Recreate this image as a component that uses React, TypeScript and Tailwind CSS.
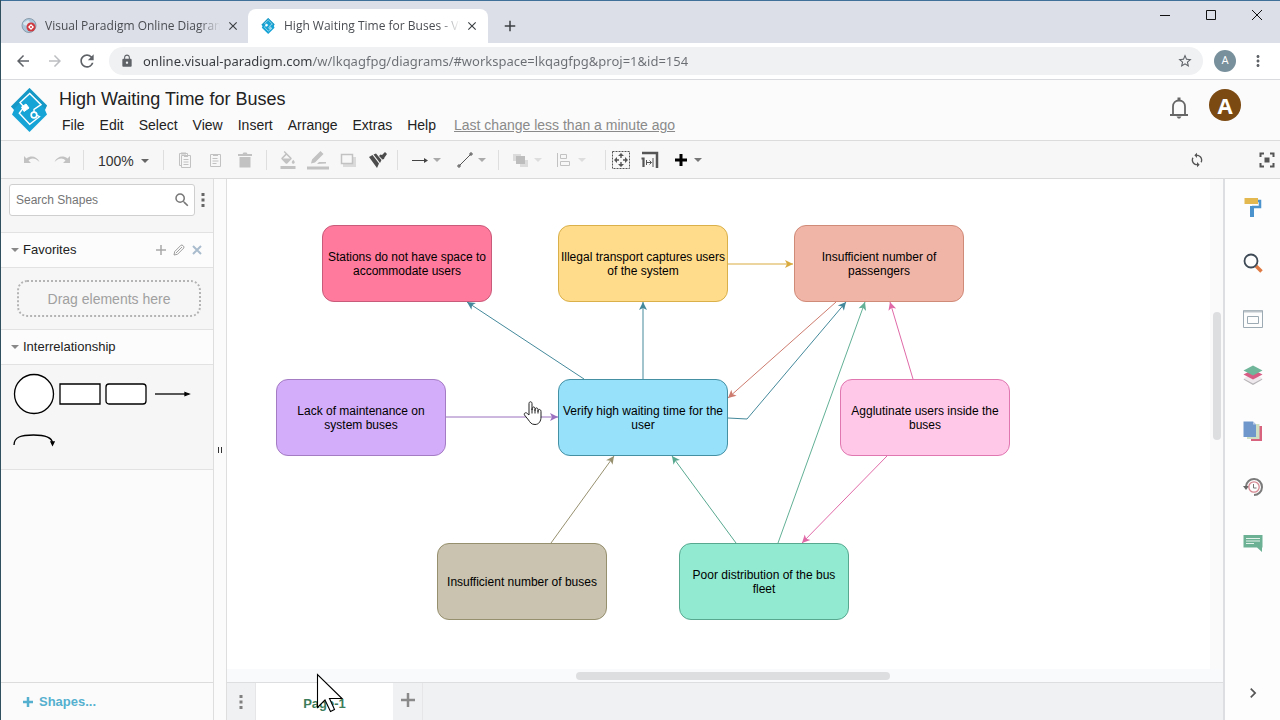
import React from 'react';
import {
    MdArrowBack,
    MdArrowForward,
    MdRefresh,
    MdLock,
    MdStarBorder,
    MdMoreVert,
    MdClose,
    MdAdd,
    MdFormatColorFill,
    MdChevronRight,
    MdSync,
    MdSearch
} from 'react-icons/md';

type Point = [number, number];

interface DiagramNode {
    label: string;
    className: string;
}

interface DiagramEdge {
    points: Point[];
    color: string;
}

interface IconButtonProps {
    label: string;
    className?: string;
    children: React.ReactNode;
}

const menus = ['File', 'Edit', 'Select', 'View', 'Insert', 'Arrange', 'Extras', 'Help'];

const nodes: DiagramNode[] = [
    { label: 'Stations do not have space to accommodate users', className: 'left-[95px] top-[46px] bg-[#ff7a9c] border-[#c85a7a]' },
    { label: 'Illegal transport captures users of the system', className: 'left-[331px] top-[46px] bg-[#ffdb8c] border-[#d9b04a]' },
    { label: 'Insufficient number of passengers', className: 'left-[567px] top-[46px] bg-[#f1b5a8] border-[#d08a78]' },
    { label: 'Lack of maintenance on system buses', className: 'left-[49px] top-[200px] bg-[#d4adfa] border-[#a47cc4]' },
    { label: 'Verify high waiting time for the user', className: 'left-[331px] top-[200px] bg-[#97e1fa] border-[#4690a4]' },
    { label: 'Agglutinate users inside the buses', className: 'left-[613px] top-[200px] bg-[#ffc8e8] border-[#e077b0]' },
    { label: 'Insufficient number of buses', className: 'left-[210px] top-[364px] bg-[#c9c3af] border-[#97906f]' },
    { label: 'Poor distribution of the bus fleet', className: 'left-[452px] top-[364px] bg-[#92ead1] border-[#58a890]' }
];

const edges: DiagramEdge[] = [
    { points: [[357, 200], [240, 123]], color: '#44899b' },
    { points: [[416, 200], [416, 123]], color: '#44899b' },
    { points: [[501, 85], [566, 85]], color: '#d9ab3f' },
    { points: [[609, 123], [501, 219]], color: '#cd7b6e' },
    { points: [[501, 239], [520, 240], [619, 123]], color: '#44899b' },
    { points: [[551, 364], [638, 123]], color: '#62b095' },
    { points: [[686, 200], [663, 123]], color: '#e06aa8' },
    { points: [[660, 277], [575, 364]], color: '#e06aa8' },
    { points: [[219, 238], [331, 238]], color: '#9a72c0' },
    { points: [[324, 364], [387, 277]], color: '#97906f' },
    { points: [[509, 364], [445, 277]], color: '#58a890' }
];

// notched arrow head, pointing from the second to last point to the last one
const arrowHead = (points: Point[]) => {
    const [x1, y1] = points[points.length - 2];
    const [x2, y2] = points[points.length - 1];
    const len = Math.hypot(x2 - x1, y2 - y1);
    const ux = (x2 - x1) / len;
    const uy = (y2 - y1) / len;
    const at = (back: number, side: number) => `${x2 - ux * back - uy * side},${y2 - uy * back + ux * side}`;
    return [at(0, 0), at(8, 4), at(6, 0), at(8, -4)].join(' ');
};

const IconButton: React.FC<IconButtonProps> = ({ label, className = '', children }) => (
    <button type="button" aria-label={label} title={label} className={`flex items-center justify-center ${className}`}>
        {children}
    </button>
);

const Caret: React.FC<{ className?: string }> = ({ className = '' }) => (
    <svg className={`h-1 w-2 ${className}`} viewBox="0 0 8 4" fill="currentColor">
        <path d="M0 0h8L4 4z" />
    </svg>
);

const VpLogo: React.FC<{ className?: string }> = ({ className = '' }) => (
    <svg className={className} viewBox="0 0 38 44">
        <path d="M19.500 0L37 17.500L35 22L37 26.500L19.500 44L2 26.500L4 22L1 18.500z" fill="#16a3d6" />
        <path d="M19.500 0L37 17.500L35 21L19.500 5.500L4 21L1 18.500z" fill="#1791bb" opacity=".6" />
        <path d="M24 24V21.300L31 16.700L19.700 5.500L10 14.500L14 19L9.300 25.300L19.700 36.300L29.500 28.700L26.500 27" fill="none" stroke="#fff" strokeWidth="1.400" />
        <path d="M11.500 19l4.500-3 3 4-5 3.500z" fill="#fff" stroke="#fff" />
        <circle cx="24" cy="27" r="2.800" fill="#16a3d6" stroke="#fff" strokeWidth="1.700" />
    </svg>
);

const TabStrip = () => (
    <div className="flex h-[43px] items-end border-t border-[#3f7099] bg-[#dddfe8] text-xs text-[#4a4d52] font-['Open_Sans','Noto_Sans',sans-serif]">
        <div className="flex h-[34px] w-[247px] items-center pl-5 pr-[7px]">
            <svg className="h-4 w-4 shrink-0" viewBox="0 0 16 16">
                <circle cx="8" cy="7.500" r="7" fill="#a9c6da" stroke="#8a9cab" />
                <path d="M2 5l5-3 3 3-3 3-4-1z" fill="#d9e6ee" />
                <circle cx="10" cy="9" r="4.500" fill="#cf3a40" />
                <path d="M10 6l3 3-3 3-3-3z" fill="#fff" />
                <path d="M10 8v2" stroke="#cf3a40" strokeWidth="1.500" />
            </svg>
            <span className="ml-2 w-[175px] whitespace-nowrap [mask-image:linear-gradient(to_right,black_88%,transparent)]">
                Visual Paradigm Online Diagrams
            </span>
            <IconButton label="Close tab" className="ml-auto h-4 w-4 shrink-0 text-[#3c4043]">
                <MdClose className="h-3.5 w-3.5" />
            </IconButton>
        </div>
        <div className="flex h-[34px] w-[240px] items-center rounded-t-lg bg-white pl-3 pr-2">
            <VpLogo className="h-4 w-4 shrink-0" />
            <span className="ml-2 w-[176px] whitespace-nowrap [mask-image:linear-gradient(to_right,black_88%,transparent)]">
                High Waiting Time for Buses - VP
            </span>
            <IconButton label="Close tab" className="ml-auto h-4 w-4 shrink-0 text-[#3c4043]">
                <MdClose className="h-3.5 w-3.5" />
            </IconButton>
        </div>
        <IconButton label="New tab" className="ml-3 h-[34px] w-5 text-[#3c4043]">
            <MdAdd className="h-[18px] w-[18px]" />
        </IconButton>
        <div className="ml-auto flex self-start text-[#111]">
            <IconButton label="Minimize" className="h-7 w-[46px]">
                <svg className="h-3 w-3" viewBox="0 0 12 12" fill="none" stroke="currentColor"><path d="M1 6.500h10" /></svg>
            </IconButton>
            <IconButton label="Maximize" className="h-7 w-[46px]">
                <svg className="h-3 w-3" viewBox="0 0 12 12" fill="none" stroke="currentColor"><path d="M1.500 1.500h9v9h-9z" /></svg>
            </IconButton>
            <IconButton label="Close" className="h-7 w-[46px]">
                <svg className="h-3 w-3" viewBox="0 0 12 12" fill="none" stroke="currentColor"><path d="M1 1l10 10M11 1L1 11" /></svg>
            </IconButton>
        </div>
    </div>
);

const AddressBar = () => (
    <div className="flex h-[37px] items-center border-b border-[#d9dadd] bg-white pl-3 pr-3 text-[#5f6368]">
        <IconButton label="Back" className="h-5 w-5"><MdArrowBack className="h-[18px] w-[18px]" /></IconButton>
        <IconButton label="Forward" className="ml-3 h-5 w-5 text-[#bcbec1]"><MdArrowForward className="h-[18px] w-[18px]" /></IconButton>
        <IconButton label="Reload" className="ml-3 h-5 w-5"><MdRefresh className="h-5 w-5" /></IconButton>
        <div className="ml-3 flex h-7 flex-1 items-center rounded-full bg-[#f0f1f3] pl-[11px] pr-2.5">
            <MdLock className="h-3.5 w-3.5" />
            {/* the host part of the address is darker than the path */}
            <input
                aria-label="Address"
                className="ml-[9px] h-6 flex-1 bg-[linear-gradient(to_right,#35383c_169px,#6a6e73_169px)] bg-clip-text text-[13px] text-transparent outline-none font-['Noto_Sans','Open_Sans',sans-serif]"
                defaultValue="online.visual-paradigm.com/w/lkqagfpg/diagrams/#workspace=lkqagfpg&proj=1&id=154"
            />
            <IconButton label="Bookmark" className="h-4 w-4"><MdStarBorder className="h-4 w-4" /></IconButton>
        </div>
        <button type="button" className="ml-[11px] h-[22px] w-[22px] rounded-full bg-[#78909c] text-[11px] text-white font-[Roboto,sans-serif]">A</button>
        <IconButton label="Menu" className="ml-3 h-5 w-5"><MdMoreVert className="h-[18px] w-[18px]" /></IconButton>
    </div>
);

const Header = () => (
    <header className="flex h-[61px] items-start border-b border-[#dcdcdc] bg-[#fbfbfb] pl-[9px]">
        <VpLogo className="mt-2 h-11 w-[38px]" />
        <div className="ml-[11px]">
            <h1 className="mt-2 text-lg leading-[22px] text-[#222]">High Waiting Time for Buses</h1>
            <nav className="mt-1.5 flex gap-[15px] pl-[3px] text-sm leading-[18px] text-[#222]">
                {menus.map((menu) => (
                    <button key={menu} type="button">{menu}</button>
                ))}
                <a href="#history" className="ml-[3px] text-[#8a8a8a] underline">Last change less than a minute ago</a>
            </nav>
        </div>
        <IconButton label="Notifications" className="ml-auto mt-4 h-6 w-6 text-[#666]">
            <svg className="h-6 w-5" viewBox="0 0 20 24" fill="none" stroke="currentColor" strokeWidth="1.800">
                <path d="M1 19h18M4 19V10.500C4 7 6.500 4.500 10 4.500S16 7 16 10.500V19" />
                <path d="M10 1.500v3" strokeWidth="3" />
                <path d="M7.500 20.500h5l-1.500 2h-2z" fill="currentColor" stroke="none" />
            </svg>
        </IconButton>
        <button type="button" className="ml-[18px] mr-[39px] mt-[9px] h-8 w-8 rounded-full bg-[#7b4a12] text-[22px] font-bold leading-8 text-white font-['Open_Sans',sans-serif]">A</button>
    </header>
);

const Separator = () => <div className="h-5 w-px bg-[#dedede]" />;

const Toolbar = () => (
    <div className="flex h-[38px] items-center border-b border-[#dadada] bg-[#f7f7f7] text-[#c2c2c2]">
        <div className="flex pl-4 pr-1.5">
            <IconButton label="Undo" className="h-6 w-[30px]">
                <svg className="h-2.5 w-4" viewBox="0 0 16 10" fill="currentColor"><path d="M0 1v7h7L4.500 5.500C7 2.500 11 2.500 15.500 7 13 1.500 7 0 2.500 3.500z" /></svg>
            </IconButton>
            <IconButton label="Redo" className="h-6 w-[30px]">
                <svg className="h-2.5 w-4" viewBox="0 0 16 10" fill="currentColor"><path d="M16 1v7H9l2.500-2.500C9 2.500 5 2.500.5 7 3 1.500 9 0 13.500 3.500z" /></svg>
            </IconButton>
        </div>
        <Separator />
        <button type="button" className="flex items-center gap-[7px] px-3.5 pt-0.5 text-sm text-[#333]">
            100% <Caret className="text-[#666]" />
        </button>
        <Separator />
        <div className="flex px-1.5">
            <IconButton label="Copy" className="h-6 w-[30px]">
                <svg className="h-4 w-4" viewBox="0 0 16 16" fill="none" stroke="currentColor"><path d="M4.500 13.500h-2v-12h8v2M4.500 3.500h9v12h-9zM6.500 7.500h5M6.500 10h5M6.500 12.500h5" /><path d="M4 1.500h5M7 4h4" strokeWidth="2" /></svg>
            </IconButton>
            <IconButton label="Paste" className="h-6 w-[30px]">
                <svg className="h-4 w-4" viewBox="0 0 16 16" fill="none" stroke="currentColor"><path d="M3.500 2.500h10v12h-10zM5.500 6.500h5M5.500 9h6M5.500 11.500h4" /><path d="M6 3h5" strokeWidth="2" /></svg>
            </IconButton>
            <IconButton label="Delete" className="h-6 w-[30px]">
                <svg className="h-4 w-4" viewBox="0 0 16 16" fill="currentColor"><path d="M1 2h4.500l1-1.500h3l1 1.500H15v2H1zM2.500 5h11v10.500h-11z" /></svg>
            </IconButton>
        </div>
        <Separator />
        <div className="flex pl-1.5 pr-1">
            <IconButton label="Fill color" className="h-6 w-[30px]"><MdFormatColorFill className="h-[18px] w-[18px]" /></IconButton>
            <IconButton label="Line color" className="h-6 w-[30px]">
                <svg className="h-5 w-[22px]" viewBox="0 0 22 20" fill="currentColor"><path d="M0 16.500h22v3H0zM4 13.500l1-4L13.500 1l3 3L8 12.500zM10 14l2-2h7v1.500z" /></svg>
            </IconButton>
            <IconButton label="Shadow" className="h-6 w-[30px]">
                <svg className="h-3.5 w-4" viewBox="0 0 16 14" fill="none"><path d="M3 4h13v10H3z" fill="#dadada" /><path d="M1.500 1.500h11v9h-11z" fill="#f7f7f7" stroke="currentColor" strokeWidth="1.500" /></svg>
            </IconButton>
            <IconButton label="Copy style" className="h-6 w-[30px] text-[#4c4c4c]">
                <svg className="h-4 w-[18px]" viewBox="0 0 18 16" fill="currentColor">
                    <path d="M0 5l3.500-2 6.500 8.500L8 16zM4.500 2.500L7 1.500l5.500 6.500-1.500 3zM10 4l1.500-1.500 1.500.500 3-3 2 2-2.500 3.500L15 7l-1.500.500z" />
                </svg>
            </IconButton>
        </div>
        <Separator />
        <div className="flex pl-1.5 pr-1">
            <IconButton label="Connection" className="h-6 w-[45px] gap-[5px]">
                <svg className="h-4 w-4 text-[#444]" viewBox="0 0 16 16" fill="none" stroke="currentColor"><path d="M0 8.500h12" /><path d="M12 6l4 2.500-4 2.500z" fill="currentColor" stroke="none" /></svg>
                <Caret className="text-[#aaa]" />
            </IconButton>
            <IconButton label="Waypoints" className="h-6 w-[45px] gap-[5px]">
                <svg className="h-4 w-4 text-[#555]" viewBox="0 0 16 16" fill="none" stroke="currentColor"><path d="M2.500 13.500l11-11" /><path d="M1 13h2v2H1zM13 1h2v2h-2z" /></svg>
                <Caret className="text-[#aaa]" />
            </IconButton>
        </div>
        <Separator />
        <div className="flex pl-1.5 pr-3">
            <IconButton label="To front" className="h-6 w-11 gap-1.5">
                <svg className="h-4 w-4" viewBox="0 0 16 16"><path d="M1 2h8v7H1zM8 8h8v7H8z" fill="#dcdcdc" /><path d="M4 4h9v8H4z" fill="#bdbdbd" /></svg>
                <Caret className="text-[#ddd]" />
            </IconButton>
            <IconButton label="Align" className="h-6 w-11 gap-1.5">
                <svg className="h-4 w-4" viewBox="0 0 16 16" fill="none" stroke="currentColor"><path d="M1.500 1v14M4.500 2.500h6v4h-6zM4.500 9.500h9v4h-9z" /></svg>
                <Caret className="text-[#ddd]" />
            </IconButton>
        </div>
        <Separator />
        <div className="flex items-center pl-px text-[#555]">
            <IconButton label="Fit page" className="h-6 w-[29px]">
                <svg className="h-[18px] w-[18px]" viewBox="0 0 18 18" fill="currentColor">
                    <path d="M.5.500h17v17H.500z" fill="none" stroke="currentColor" strokeDasharray="2 1" />
                    <path d="M9 2l3 3H9.700v2H8.300V5H6zM9 16l3-3H9.700v-2H8.300v2H6zM2 9l3-3v2.300h2v1.400H5V12zM16 9l-3-3v2.300h-2v1.400h2V12z" />
                </svg>
            </IconButton>
            <IconButton label="Page size" className="h-6 w-[29px]">
                <svg className="h-[18px] w-[18px]" viewBox="0 0 18 18" fill="none" stroke="currentColor">
                    <path d="M1 2h15V17" strokeWidth="2.500" />
                    <path d="M.5 7.500h2V16" strokeWidth="2.200" />
                    <path d="M5.500 11.500h5M8.500 9.500l2 2-2 2M12 7v9M5.500 9v5" />
                </svg>
            </IconButton>
            <IconButton label="Add" className="h-6 w-[46px] gap-1.5 text-[#000]">
                <svg className="h-3.5 w-3.5" viewBox="0 0 14 14" stroke="currentColor" strokeWidth="3"><path d="M7 1v12M1 7h12" /></svg>
                <Caret className="text-[#777]" />
            </IconButton>
        </div>
        <IconButton label="Sync" className="ml-auto h-6 w-6 text-[#555]"><MdSync className="h-4 w-4" /></IconButton>
        <IconButton label="Full screen" className="ml-[50px] mr-[5px] h-6 w-4 text-[#555]">
            <svg className="h-4 w-4" viewBox="0 0 16 16"><path d="M1.500 5V1.500H5M11 1.500h3.500V5M14.500 11v3.500H11M5 14.500H1.500V11" fill="none" stroke="currentColor" strokeWidth="2" /><path d="M5.500 5.500h5v5h-5z" fill="currentColor" /></svg>
        </IconButton>
    </div>
);

const Sidebar = () => (
    <aside className="flex w-[213px] shrink-0 flex-col border-r border-[#dedede] bg-[#fbfbfb] text-[13px] text-[#222]">
        <div className="flex h-[54px] items-start border-b border-[#e2e2e2] bg-[#f6f6f6] pl-2 pt-[5px]">
            <div className="flex h-8 w-[186px] items-center rounded-[3px] border border-[#cfcfcf] bg-white pl-1.5 pr-[3px]">
                <input
                    aria-label="Search Shapes"
                    className="w-full min-w-0 flex-1 bg-transparent text-xs outline-none placeholder:text-[#757575]"
                    placeholder="Search Shapes"
                />
                <MdSearch className="h-[18px] w-[18px] shrink-0 text-[#777]" />
            </div>
            <IconButton label="More" className="h-8 w-4 text-[#666]">
                <svg className="h-3.5 w-1" viewBox="0 0 4 14" fill="currentColor"><path d="M.5 0h3v3h-3zM.5 5.500h3v3h-3zM.5 11h3v3h-3z" /></svg>
            </IconButton>
        </div>
        <div className="flex h-[35px] items-center border-b border-[#e2e2e2] bg-[#fcfcfc] pl-2.5 pr-2">
            <button type="button" className="flex items-center gap-1"><Caret className="text-[#888]" /> Favorites</button>
            <div className="ml-auto flex gap-0.5">
                <IconButton label="Add" className="h-4 w-4 text-[#a8a8a8]">
                    <svg className="h-3 w-3" viewBox="0 0 12 12" stroke="currentColor" strokeWidth="1.500"><path d="M6 1v10M1 6h10" /></svg>
                </IconButton>
                <IconButton label="Edit" className="h-4 w-4 text-[#888]">
                    <svg className="h-3 w-3" viewBox="0 0 12 12" fill="none" stroke="currentColor"><path d="M1 11l.700-3.500L8 1.200c1-1 3.800 1.500 2.800 2.800L4.500 10.300zM2.800 9.200L9 3" strokeWidth=".8" /></svg>
                </IconButton>
                <IconButton label="Remove" className="h-4 w-4 text-[#a9bccd]">
                    <svg className="h-2.5 w-2.5" viewBox="0 0 10 10" stroke="currentColor" strokeWidth="2"><path d="M1 1l8 8M9 1L1 9" /></svg>
                </IconButton>
            </div>
        </div>
        <div className="border-b border-[#e2e2e2] bg-[#f6f6f6] px-3 pb-3 pl-4 pt-3">
            <div className="flex h-[37px] items-center justify-center rounded-[10px] border-2 border-dotted border-[#b4b4b4] text-sm text-[#a0a0a0]">
                Drag elements here
            </div>
        </div>
        <div className="flex h-[35px] items-center border-b border-[#e2e2e2] bg-[#fcfcfc] pl-2.5">
            <button type="button" className="flex items-center gap-1"><Caret className="text-[#888]" /> Interrelationship</button>
        </div>
        <div className="flex flex-wrap border-b border-[#e2e2e2] bg-[#f6f6f6] py-1.5 pl-2.5">
            <IconButton label="Circle" className="h-[46px] w-[46px]">
                <svg className="h-[42px] w-[42px]" viewBox="0 0 42 42" fill="#fff" stroke="#000" strokeWidth="1.300"><circle cx="21" cy="21" r="19.500" /></svg>
            </IconButton>
            <IconButton label="Rectangle" className="h-[46px] w-[46px]">
                <svg className="h-[42px] w-[42px]" viewBox="0 0 42 42" fill="#fff" stroke="#000" strokeWidth="1.300"><path d="M1 11h40v20H1z" /></svg>
            </IconButton>
            <IconButton label="Rounded rectangle" className="h-[46px] w-[46px]">
                <svg className="h-[42px] w-[42px]" viewBox="0 0 42 42" fill="#fff" stroke="#000" strokeWidth="1.300"><rect x="1" y="11" width="40" height="20" rx="3" /></svg>
            </IconButton>
            <IconButton label="Arrow" className="h-[46px] w-[46px]">
                <svg className="h-[42px] w-[42px]" viewBox="0 0 42 42" stroke="#000" strokeWidth="1.300"><path d="M4 21h31" /><path d="M34 19.500l4 1.500-4 1.500z" /></svg>
            </IconButton>
            <IconButton label="Curved arrow" className="h-[46px] w-[46px]">
                <svg className="h-[42px] w-[42px]" viewBox="0 0 42 42" fill="none" stroke="#000" strokeWidth="1.300"><path d="M1 26C1 18 8 16 20.500 16S39 19 39.500 24" /><path d="M38 23h3l-1.500 3z" fill="#000" /></svg>
            </IconButton>
        </div>
        <button type="button" className="mt-auto flex h-[38px] items-center gap-1.5 border-t border-[#dcdcdc] pl-[22px] text-[13px] font-bold text-[#55b0cf]">
            <svg className="h-2.5 w-2.5" viewBox="0 0 10 10" stroke="currentColor" strokeWidth="2.500"><path d="M5 0v10M0 5h10" /></svg>
            Shapes...
        </button>
    </aside>
);

const Diagram = () => (
    <div className="relative min-w-0 flex-1 overflow-hidden bg-white">
        <svg className="absolute left-0 top-0 h-full w-full" fill="none">
            {edges.map((edge, index) => (
                <g key={index}>
                    <polyline points={edge.points.map((p) => p.join(',')).join(' ')} stroke={edge.color} />
                    <polygon points={arrowHead(edge.points)} fill={edge.color} />
                </g>
            ))}
        </svg>
        {nodes.map((node) => (
            <div
                key={node.label}
                className={`absolute flex h-[77px] w-[170px] items-center justify-center rounded-xl border px-px text-center text-xs leading-[14px] text-black ${node.className}`}
            >
                {node.label}
            </div>
        ))}
        <svg className="absolute left-[296px] top-[221px] h-[26px] w-5" viewBox="0 0 20 26" fill="#fff" stroke="#222" strokeLinejoin="round">
            <path d="M6 15V3.500C6 1.200 9 1.200 9 3.500V10C9 6 12 6.500 12 8.500V10.500C12 7 15 7.500 15 9.500V11.500C15 8.500 18 9 18 11.500V17C18 21 16 24.500 12 24.500C8 24.500 7 22 5.500 20L1.500 15C.5 13 3 12 4.300 13.500z" />
            <path d="M9 9.500v4M12 10v3.500M15 11v2.500" />
        </svg>
    </div>
);

const PageTabs = () => (
    <div className="relative flex h-[38px] border-t border-[#dcdee0] bg-[#f0f1f3]">
        <IconButton label="Pages" className="w-[29px] border-r border-[#e6e6e8] text-[#808080]">
            <svg className="h-3.5 w-1" viewBox="0 0 4 14" fill="currentColor"><path d="M.5 0h3v3h-3zM.5 5.500h3v3h-3zM.5 11h3v3h-3z" /></svg>
        </IconButton>
        <button type="button" className="w-[137px] bg-white pt-1 text-[13px] font-bold text-[#3d7d5c]">Page-1</button>
        <IconButton label="Insert page" className="w-[30px] border-r border-[#e6e6e8] pb-[3px] text-[#8a8a8a]">
            <svg className="h-3.5 w-3.5" viewBox="0 0 14 14" stroke="currentColor" strokeWidth="2.500"><path d="M7 0v14M0 7h14" /></svg>
        </IconButton>
        <svg className="absolute -top-2.5 left-[89px] h-10 w-7" viewBox="0 0 28 40" fill="#fff" stroke="#000" strokeWidth="1.100">
            <path d="M1.500 1.500V34.500L9 27L14.500 38.500L18.500 36.500L13.500 25.500H26z" />
        </svg>
    </div>
);

const PanelBar = () => (
    <aside className="flex w-[57px] shrink-0 flex-col border-l-2 border-[#dcdee2] bg-[#fdfdfd]">
        <IconButton label="Style" className="h-14">
            <svg className="h-5 w-5" viewBox="0 0 20 20"><path d="M15 4h2v6H9" fill="none" stroke="#4a93cc" strokeWidth="2.500" /><path d="M7 9h4v11H7z" fill="#4a93cc" /><path d="M1.500 1H15v6H1.500z" fill="#e3b84e" /></svg>
        </IconButton>
        <IconButton label="Find" className="h-14">
            <svg className="h-5 w-5" viewBox="0 0 20 20" fill="none"><path d="M13 13l5.500 5.500" stroke="#e07a45" strokeWidth="3.500" /><circle cx="8" cy="8" r="6.500" stroke="#3e4a56" strokeWidth="1.800" /></svg>
        </IconButton>
        <IconButton label="Outline" className="h-14">
            <svg className="h-5 w-5" viewBox="0 0 20 20" fill="none" stroke="#9caab3"><path d="M.5 1.500h19v17H.500z" /><path d="M1 2.500h18" strokeWidth="2" stroke="#bcc4c9" /><path d="M4.500 7.500h11v7h-11z" /></svg>
        </IconButton>
        <IconButton label="Layers" className="h-14">
            <svg className="h-5 w-5" viewBox="0 0 20 20"><path d="M10 9l9.500 5.500L10 20 .5 14.500z" fill="#b6b3b6" /><path d="M10 8l9.500 5.500L10 18.500.5 13.500z" fill="#eee9ec" /><path d="M10 4.500l9.500 5L10 14.500.5 9.500z" fill="#d75d85" /><path d="M10 .5l9.500 5L10 10.500.5 5.500z" fill="#6fb69a" /></svg>
        </IconButton>
        <IconButton label="Pages" className="h-14">
            <svg className="h-5 w-5" viewBox="0 0 20 20"><path d="M8 5h11v15H8z" fill="#d8637e" /><path d="M4 3h12.500v15H4z" fill="#cfe0c2" /><path d="M.5.500H10l3 3V16H.500z" fill="#6f97cb" /><path d="M10 .5v3h3z" fill="#b9cbe5" /></svg>
        </IconButton>
        <IconButton label="History" className="h-14">
            <svg className="h-5 w-5" viewBox="0 0 20 20" fill="none"><path d="M3 9.500A8 8 0 1 1 11 18" stroke="#7b7b7b" strokeWidth="2" /><path d="M0 9h6l-3 4z" fill="#666" /><circle cx="11" cy="10" r="5.200" stroke="#d58791" strokeWidth="1.300" /><path d="M10.500 7v4h3" stroke="#777" /></svg>
        </IconButton>
        <IconButton label="Comments" className="h-14">
            <svg className="h-5 w-5" viewBox="0 0 20 20"><path d="M.5 2h19v12.500H19V19l-5-4.500H.500z" fill="#6db195" /><path d="M3 5.500h14M3 8h14M3 10.500h8" stroke="#e4f2ec" strokeWidth="1.200" /></svg>
        </IconButton>
        <IconButton label="Collapse" className="mt-auto mb-[15px] h-6 text-[#555]"><MdChevronRight className="h-5 w-5" /></IconButton>
    </aside>
);

const App: React.FC = () => (
    <div className="flex h-screen flex-col overflow-hidden border-l border-[#31505f] bg-white font-['Liberation_Sans',Arial,sans-serif]">
        <TabStrip />
        <AddressBar />
        <Header />
        <Toolbar />
        <div className="flex min-h-0 flex-1">
            <Sidebar />
            <div className="flex w-[13px] shrink-0 items-center justify-center border-r border-[#dedede] bg-[#fbfbfb]">
                <svg className="h-1.5 w-1" viewBox="0 0 4 6" stroke="#333"><path d="M.5 0v6M3.500 0v6" /></svg>
            </div>
            <main className="flex min-w-0 flex-1 flex-col">
                <div className="flex min-h-0 flex-1">
                    <Diagram />
                    <div className="w-[13px] bg-[#fafafb] pl-[3px] pt-[133px]">
                        <div className="h-32 w-2 rounded-full bg-[#dddee0]" />
                    </div>
                </div>
                <div className="h-[13px] bg-[#f9fafb] pl-[349px] pt-[3px]">
                    <div className="h-2 w-[314px] rounded-full bg-[#dddee0]" />
                </div>
                <PageTabs />
            </main>
            <PanelBar />
        </div>
    </div>
);

export default App;
